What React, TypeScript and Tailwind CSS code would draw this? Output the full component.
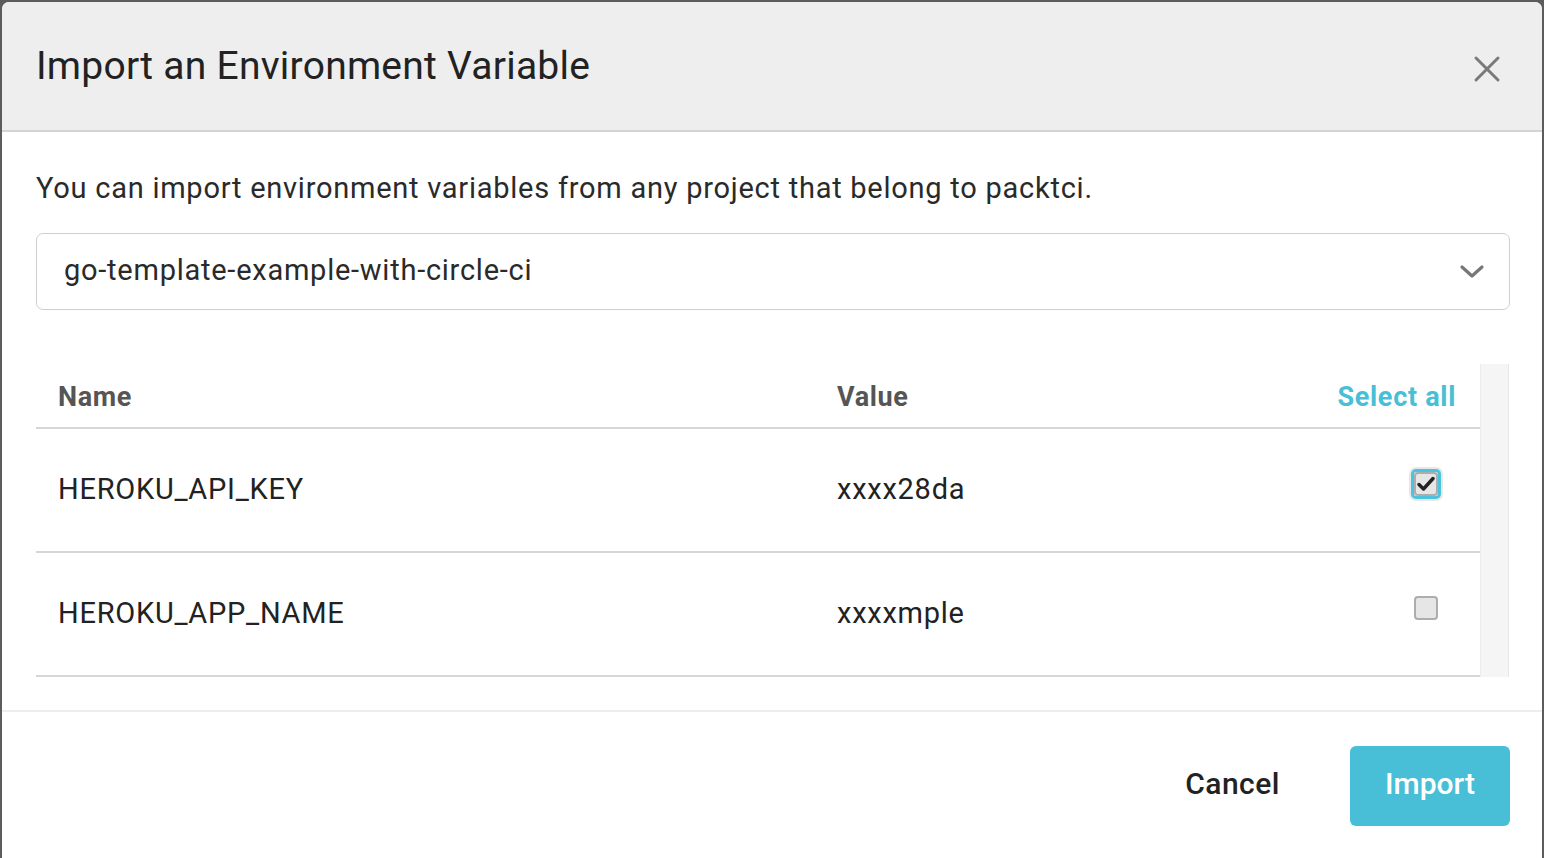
import React, { useState } from 'react';

interface EnvVar {
  name: string;
  value: string;
}

const vars: EnvVar[] = [
  { name: 'HEROKU_API_KEY', value: 'xxxx28da' },
  { name: 'HEROKU_APP_NAME', value: 'xxxxmple' },
];

const Checkbox: React.FC<{ checked: boolean; focused?: boolean; onChange: () => void }> = ({ checked, focused, onChange }) => (
  <button
    onClick={onChange}
    className={
      focused
        ? 'w-[34px] h-[34px] mb-[12px] rounded-[7px] bg-[#e8e8e8] p-[2px] flex items-center justify-center'
        : 'w-[34px] h-[34px] mb-[12px] flex items-center justify-center'
    }
  >
    <span
      className={
        focused
          ? 'w-full h-full rounded-[5px] border-[3px] border-[#4cc3dc] flex items-center justify-center'
          : 'w-full h-full flex items-center justify-center'
      }
    >
      <span className="w-[24px] h-[24px] rounded-[4px] border-2 border-[#adadad] bg-[#e6e6e6] flex items-center justify-center">
        {checked && (
          <svg width="18" height="16" viewBox="0 0 18 16">
            <path d="M2 8.5 L6.5 13 L16 2.5" fill="none" stroke="#222" strokeWidth="3.4" strokeLinecap="round" strokeLinejoin="round" />
          </svg>
        )}
      </span>
    </span>
  </button>
);

export default function App() {
  const [selected, setSelected] = useState<boolean[]>([true, false]);

  const toggle = (i: number) => setSelected(s => s.map((v, j) => (j === i ? !v : v)));

  return (
    <div
      className="w-[1544px] h-[858px] bg-[#5c5c5c] px-[2px] pt-[2px] overflow-hidden"
      style={{ fontFamily: 'Roboto, "Noto Sans", sans-serif' }}
    >
      <div className="h-[862px] bg-white rounded-[7px] overflow-hidden flex flex-col">
        {/* Header */}
        <div className="h-[130px] shrink-0 bg-[#eeeeee] border-b-2 border-[#d4d4d4] flex items-center justify-between pl-[34px] pr-[40px]">
          <h1 className="text-[39px] tracking-[0.25px] text-[#222] leading-none">Import an Environment Variable</h1>
          <svg width="30" height="30" viewBox="0 0 30 30" className="mt-[6px]">
            <path d="M4 4 L26 26 M26 4 L4 26" stroke="#7a7a7a" strokeWidth="3" strokeLinecap="round" />
          </svg>
        </div>

        {/* Body */}
        <div className="pl-[34px] pr-[32px] pt-[39px] h-[580px] shrink-0 border-b-2 border-[#ededed]">
          <p className="text-[29px] tracking-[0.75px] text-[#2a2a2a] leading-[34px]">
            You can import environment variables from any project that belong to packtci.
          </p>

          <div className="mt-[28px] h-[77px] border border-[#cfcfcf] rounded-[7px] flex items-center justify-between pl-[27px] pr-[24px]">
            <span className="text-[29px] tracking-[0.75px] text-[#2a2a2a] pb-[2px]">go-template-example-with-circle-ci</span>
            <svg width="26" height="16" viewBox="0 0 26 16">
              <path d="M3 3 L13 12 L23 3" fill="none" stroke="#777" strokeWidth="3.2" strokeLinecap="round" strokeLinejoin="round" />
            </svg>
          </div>

          {/* Table with scroll track */}
          <div className="mt-[54px] flex">
            <div className="w-[1444px]">
              <div className="h-[65px] border-b-2 border-[#d6d6d6] grid grid-cols-[779px_1fr_auto] items-center pl-[22px] pr-[24px] pt-[3px]">
                <span className="text-[27px] tracking-[0.6px] font-bold text-[#555]">Name</span>
                <span className="text-[27px] tracking-[0.6px] font-bold text-[#555]">Value</span>
                <button
                  className="text-[27px] tracking-[0.7px] font-bold text-[#47bfd7]"
                  onClick={() => setSelected(vars.map(() => true))}
                >
                  Select all
                </button>
              </div>
              {vars.map((v, i) => (
                <div
                  key={v.name}
                  className="h-[124px] border-b-2 border-[#d6d6d6] grid grid-cols-[779px_1fr_auto] items-center pl-[22px] pr-[37px]"
                >
                  <span className="text-[29px] tracking-[0.75px] text-[#222]">{v.name}</span>
                  <span className="text-[29px] tracking-[0.75px] text-[#222]">{v.value}</span>
                  <Checkbox checked={selected[i]} focused={i === 0} onChange={() => toggle(i)} />
                </div>
              ))}
            </div>
            <div className="w-[29px] h-[313px] bg-[#f5f5f5] border-l border-[#ececec] border-r border-r-[#e6e6e6]" />
          </div>
        </div>

        {/* Footer */}
        <div className="flex items-center justify-end gap-[70px] pr-[32px] pt-[34px]">
          <button className="h-[80px] pb-[5px] text-[30px] tracking-[0.5px] font-medium text-[#222]">Cancel</button>
          <button className="w-[160px] h-[80px] pb-[5px] rounded-[6px] bg-[#48bfd7] text-white text-[30px] font-medium">
            Import
          </button>
        </div>
      </div>
    </div>
  );
}
